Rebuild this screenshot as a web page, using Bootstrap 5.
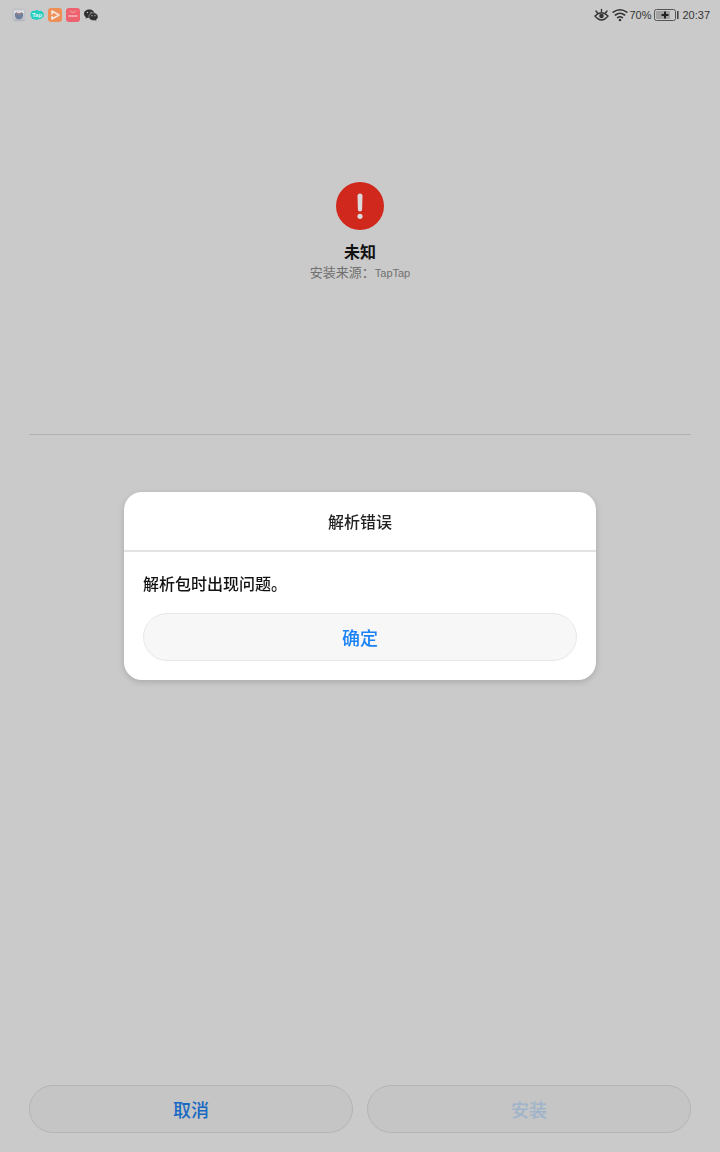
<!DOCTYPE html>
<html lang="zh-CN">
<head>
<meta charset="utf-8">
<meta name="viewport" content="width=device-width, initial-scale=1">
<title>安装</title>
<link href="https://cdn.jsdelivr.net/npm/bootstrap@5.3.0/dist/css/bootstrap.min.css" rel="stylesheet">
<style>
body{background:#cacaca;color:#111;font-family:"Liberation Sans","Noto Sans CJK SC",sans-serif}
.status-bar{height:30px;padding:0 10px 0 12px;font-size:11px;line-height:16px;color:#333}
.status-bar svg{display:block}
.status-apps{gap:4px}
.status-info{gap:3px}
.network{gap:1px}
.app-info{height:404px;padding-top:152px}
.app-name{font-size:16px;line-height:20px;margin-top:13px;font-weight:700}
.app-source{font-size:13px;line-height:19px;color:#707070}
.source-name{font-size:11px}
.divider{margin:0 29px;border:0;border-top:1px solid #b0b0b0;opacity:1}
.actions{padding:0 29px 19px;gap:14px}
.btn.pill{height:48px;border-radius:24px;font-size:18px;line-height:24px;padding:3px 12px 0;background:#c5c5c5;border:1px solid #b5b5b5;color:#1769c4;font-weight:500;opacity:1}
.btn.pill:disabled{color:#9fb4cb}
.btn.pill.ok{background:#f7f7f7;border-color:#e8e8e8;color:#1a83f7}
.dialog-layer{padding-top:20px}
.dialog-box{width:66%;max-width:472px;border-radius:18px;background:#fff;box-shadow:0 2px 6px rgba(0,0,0,.16)}
.dialog-title{height:60px;padding-top:3px;font-size:16px;line-height:24px;font-weight:500;border-bottom:2px solid #e2e2e2;color:#222}
.dialog-content{padding:21px 19px 19px}
.dialog-text{font-size:16px;line-height:24px;margin-bottom:16px;font-weight:500}
</style>
</head>
<body class="min-vh-100 d-flex flex-column">
<header class="status-bar d-flex justify-content-between align-items-center">
  <div class="status-apps d-flex">
    <svg width="14" height="14" viewBox="0 0 14 14"><rect width="14" height="14" rx="3" fill="#c3c4c9"/><path d="M2 2.500h10v3H2z" fill="#dcdde0"/><path d="M3 5h8v3q-.5 3-4 3.500Q3.500 11 3 8z" fill="#6c7f9f"/><path d="M4 4l3 1.500L10 4v1.500L7 7 4 5.500z" fill="#a9828c"/><path d="M2.500 11.500h9v1h-9z" fill="#a9abb3"/></svg>
    <svg width="14" height="14" viewBox="0 0 14 14"><path d="M1.500 4q1-2 3-1 2-2 4.500 0 3-1 3.500 1 2 1 1 3 1 3-2 3-1 2-3 1-2 2-4 0-3 1-3-2-2-1-.5-3-1-1 .5-2z" fill="#25cfc0"/><text x="7" y="9" text-anchor="middle" font-size="6" font-weight="700" fill="#e2f5f2">Tap</text></svg>
    <svg width="14" height="14" viewBox="0 0 14 14"><rect width="14" height="14" rx="3" fill="#ed8f57"/><path d="M4 6V3l7 4-7 4V8.500" fill="none" stroke="#f5e7df" stroke-width="1.600" stroke-linejoin="round" stroke-linecap="round"/></svg>
    <svg width="14" height="14" viewBox="0 0 14 14"><rect width="14" height="14" rx="3" fill="#ee6270"/><path d="M4.500 2.500q0 2 2.500 2t2.500-2" fill="none" stroke="#f5b4b8" stroke-width=".8"/><path d="M2.500 8h9" stroke="#f6c8cb" stroke-width="1.600" stroke-dasharray="1.300 .3"/></svg>
    <svg width="14" height="14" viewBox="0 0 14 14"><path d="M5.300 1.500C2.400 1.500 0 3.300 0 5.800c0 1.400.8 2.600 2 3.400l-.5 1.600 2-1q1 .2 1.800.2C8 10 10.500 8.200 10.500 5.800S8.200 1.500 5.300 1.500z" fill="#303030"/><path d="M9.400 4.800c-2.600 0-4.600 1.700-4.600 3.900s2 3.900 4.600 3.900q.8 0 1.500-.2l1.600.9-.4-1.500c1.200-.8 1.900-1.800 1.900-3.100 0-2.200-2-3.900-4.600-3.900z" fill="#303030" stroke="#cacaca" stroke-width=".5"/><g fill="#cacaca"><circle cx="3.500" cy="4.500" r=".7"/><circle cx="7" cy="4.300" r=".6"/><circle cx="8" cy="7.700" r=".6"/><circle cx="11" cy="7.700" r=".6"/></g></svg>
  </div>
  <div class="status-info d-flex align-items-center">
    <svg width="15" height="14" viewBox="0 0 15 14" fill="none" stroke="#333" stroke-width="1.400" stroke-linecap="round"><path d="M1 8Q7.500 1.500 14 8 7.500 16 1 8z"/><circle cx="7.500" cy="8" r="2.300" fill="#333" stroke="none"/><path d="M7.500 1.500v2M2 3l1.500 2M13 3l-1.500 2"/></svg>
    <div class="network d-flex align-items-center">
      <svg width="16" height="14" viewBox="0 0 16 14" fill="none" stroke="#333" stroke-width="1.600" stroke-linecap="round"><path d="M1.200 4.200q6.800-5 13.600 0M3.400 7q4.600-3.600 9.200 0M5.600 9.600q2.400-1.800 4.800 0"/><circle cx="8" cy="12" r="1.300" fill="#333" stroke="none"/></svg>
      <span>70%</span>
    </div>
    <svg width="25" height="12" viewBox="0 0 25 12"><rect x=".5" y=".5" width="21" height="11" rx="2" fill="none" stroke="#555"/><rect x="2" y="2" width="14" height="8" fill="#a3a3a3"/><path d="M7.500 6h7M11 2.500v7" stroke="#222" stroke-width="2"/><path d="M23.800 2v8" stroke="#444" stroke-width="1.600"/></svg>
    <span>20:37</span>
  </div>
</header>
<main class="flex-grow-1 d-flex flex-column">
  <section class="app-info text-center">
    <svg class="d-block mx-auto" width="48" height="48" viewBox="0 0 48 48"><circle cx="24" cy="24" r="24" fill="#d0281c"/><path d="M21.500 14a2.500 2.500 0 0 1 5 0l-.4 13.500a2.100 2.100 0 0 1-4.200 0z" fill="#dadada"/><circle cx="24" cy="34.300" r="2.600" fill="#dadada"/></svg>
    <h1 class="app-name mb-0">未知</h1>
    <p class="app-source mb-0">安装来源：<span class="source-name">TapTap</span></p>
  </section>
  <hr class="divider">
  <div class="actions d-flex mt-auto">
    <button type="button" class="btn pill flex-fill w-50">取消</button>
    <button type="button" class="btn pill flex-fill w-50" disabled>安装</button>
  </div>
</main>
<div class="dialog-layer position-fixed top-0 start-0 w-100 h-100 d-flex align-items-center justify-content-center">
  <div class="dialog-box" role="alertdialog" aria-modal="true" aria-labelledby="dlg-title" aria-describedby="dlg-text">
    <h2 id="dlg-title" class="dialog-title d-flex align-items-center justify-content-center mb-0">解析错误</h2>
    <div class="dialog-content">
      <p id="dlg-text" class="dialog-text">解析包时出现问题。</p>
      <button type="button" class="btn pill ok w-100">确定</button>
    </div>
  </div>
</div>
<script src="https://cdn.jsdelivr.net/npm/bootstrap@5.3.0/dist/js/bootstrap.bundle.min.js"></script>
</body>
</html>
